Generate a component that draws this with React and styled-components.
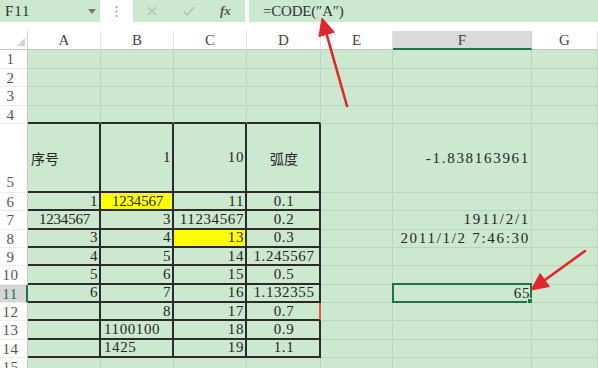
import React from 'react';
import styled, { createGlobalStyle } from 'styled-components';

const GREEN = '#cce8cf';
const GRID = '#bad5bd';
const EXCEL = '#217346';
const INK = '#262626';
const SERIF = "'Liberation Serif', 'DejaVu Serif', serif";

const GlobalStyle = createGlobalStyle`
  html, body { margin: 0; padding: 0; background: #fff; }
  body { overflow: hidden; }
`;

const Page = styled.div`
  position: relative;
  width: 598px;
  height: 368px;
  overflow: hidden;
  background: #fff;
  font-family: ${SERIF};
`;

const Toolbar = styled.div`
  display: flex;
  height: 22px;
`;

const NameBox = styled.div`
  width: 100px;
  box-sizing: border-box;
  padding: 0 4px 0 5px;
  background: ${GREEN};
  display: flex;
  align-items: center;
  justify-content: space-between;
  font-size: 15px;
  letter-spacing: 0.8px;
  color: #333;
`;

const Grip = styled.div`
  width: 33px;
  display: flex;
  align-items: center;
  justify-content: center;
`;

const ButtonBox = styled.div`
  width: 112px;
  box-sizing: border-box;
  padding: 0 13px 0 14px;
  background: ${GREEN};
  display: flex;
  align-items: center;
  justify-content: space-between;
`;

const Fx = styled.span`
  font-style: italic;
  font-weight: bold;
  font-size: 13px;
  color: #555;
  width: 12px;
`;

const Formula = styled.div`
  flex: 1;
  margin-left: 4px;
  padding-left: 14px;
  background: ${GREEN};
  display: flex;
  align-items: center;
  font-size: 15px;
  letter-spacing: -0.2px;
  color: #333;
`;

const Spacer = styled.div`
  height: 9px;
`;

const Sheet = styled.div`
  display: grid;
  grid-template-columns: 28px 73px 73px 73px 74px 72px 139px 1fr;
  grid-template-rows: 19px repeat(4, 18.5px) 69px repeat(9, 18.33px) 1fr;
  height: 337px;
`;

const Corner = styled.div`
  box-sizing: border-box;
  border-right: 1px solid #d4d4d4;
  border-bottom: 1px solid #c6c6c6;
  display: flex;
  align-items: flex-end;
  justify-content: flex-end;
  padding: 0 2px 3px 0;
`;

const ColHead = styled.div`
  box-sizing: border-box;
  display: flex;
  align-items: center;
  justify-content: center;
  background: ${p => (p.$active ? '#dadada' : '#fff')};
  border-right: 1px solid ${p => (p.$active ? '#cfcfcf' : '#e2e2e2')};
  border-bottom: ${p => (p.$active ? `2px solid ${EXCEL}` : '1px solid #c6c6c6')};
  font-size: 15px;
  color: #444;
  padding-top: 1px;
`;

const RowHead = styled.div`
  box-sizing: border-box;
  display: flex;
  align-items: ${p => (p.$tall ? 'flex-end' : 'flex-start')};
  justify-content: center;
  padding: ${p => (p.$tall ? '0 6px 1px 0' : '1px 6px 0 0')};
  background: ${p => (p.$active ? '#d6d6d6' : '#fff')};
  border-right: ${p => (p.$active ? `2px solid ${EXCEL}` : '1px solid #c8c8c8')};
  border-bottom: 1px solid #ededed;
  font-size: 15px;
  letter-spacing: 0.6px;
  line-height: 17px;
  color: ${p => (p.$active ? EXCEL : '#555')};
`;

const justify = { left: 'flex-start', center: 'center', right: 'flex-end' };
const spacing = { cjk: '0', tight: '-0.2px', wide: '1.7px', normal: '0.6px' };
const LINE = '2px solid #2b2b2b';

const Cell = styled.div`
  box-sizing: border-box;
  position: relative;
  display: flex;
  align-items: center;
  justify-content: ${p => justify[p.$align || 'right']};
  padding: 0 1px 0 3px;
  background: ${p => p.$bg || GREEN};
  border-right: ${p => (p.$mark ? '2px solid #e65a45' : p.$boxR ? LINE : `1px solid ${GRID}`)};
  border-bottom: ${p => (p.$boxB ? LINE : `1px solid ${GRID}`)};
  font-family: ${p => (p.$kind === 'cjk' ? "'Noto Sans CJK SC', sans-serif" : SERIF)};
  font-size: ${p => (p.$kind === 'cjk' ? '14px' : '15px')};
  letter-spacing: ${p => spacing[p.$kind || 'normal']};
  color: ${INK};
  white-space: nowrap;
`;

const Selection = styled.div`
  position: absolute;
  left: -1px;
  top: -2px;
  right: -1px;
  bottom: -1px;
  border: 2px solid ${EXCEL};
  pointer-events: none;
`;

const Handle = styled.div`
  position: absolute;
  right: -4px;
  bottom: -4px;
  width: 5px;
  height: 5px;
  background: ${EXCEL};
  border: 1px solid ${GREEN};
`;

const Overlay = styled.svg`
  position: absolute;
  left: 0;
  top: 0;
  pointer-events: none;
`;

const COLS = ['A', 'B', 'C', 'D', 'E', 'F', 'G'];

const rows = [
  { n: 1 },
  { n: 2 },
  { n: 3 },
  { n: 4 },
  {
    n: 5,
    tall: true,
    cells: {
      A: { t: '序号', align: 'left', kind: 'cjk' },
      B: { t: '1' },
      C: { t: '10' },
      D: { t: '弧度', align: 'center', kind: 'cjk' },
      F: { t: '-1.838163961', kind: 'wide' },
    },
  },
  {
    n: 6,
    cells: {
      A: { t: '1' },
      B: { t: '1234567', align: 'center', bg: '#ffff00', kind: 'tight' },
      C: { t: '11' },
      D: { t: '0.1', align: 'center' },
    },
  },
  {
    n: 7,
    cells: {
      A: { t: '1234567', align: 'center', kind: 'tight' },
      B: { t: '3' },
      C: { t: '11234567' },
      D: { t: '0.2', align: 'center' },
      F: { t: '1911/2/1', kind: 'wide' },
    },
  },
  {
    n: 8,
    cells: {
      A: { t: '3' },
      B: { t: '4' },
      C: { t: '13', bg: '#ffff00' },
      D: { t: '0.3', align: 'center' },
      F: { t: '2011/1/2 7:46:30', kind: 'wide' },
    },
  },
  { n: 9, cells: { A: { t: '4' }, B: { t: '5' }, C: { t: '14' }, D: { t: '1.245567', align: 'center' } } },
  { n: 10, cells: { A: { t: '5' }, B: { t: '6' }, C: { t: '15' }, D: { t: '0.5', align: 'center' } } },
  {
    n: 11,
    active: true,
    cells: {
      A: { t: '6' },
      B: { t: '7' },
      C: { t: '16' },
      D: { t: '1.132355', align: 'center' },
      F: { t: '65', selected: true },
    },
  },
  { n: 12, cells: { B: { t: '8' }, C: { t: '17' }, D: { t: '0.7', align: 'center', mark: true } } },
  { n: 13, cells: { B: { t: '1100100', align: 'left' }, C: { t: '18' }, D: { t: '0.9', align: 'center' } } },
  { n: 14, cells: { B: { t: '1425', align: 'left' }, C: { t: '19' }, D: { t: '1.1', align: 'center' } } },
  { n: 15 },
];

const inTable = col => ['A', 'B', 'C', 'D'].includes(col);

const Arrow = ({ from, to, head = 17, half = 8 }) => {
  const dx = to[0] - from[0];
  const dy = to[1] - from[1];
  const len = Math.hypot(dx, dy);
  const ux = dx / len;
  const uy = dy / len;
  const bx = to[0] - ux * head;
  const by = to[1] - uy * head;
  const px = -uy * half;
  const py = ux * half;
  return (
    <g fill="#e3262c" stroke="#e3262c">
      <line x1={from[0]} y1={from[1]} x2={bx + ux * 2} y2={by + uy * 2} strokeWidth="2.6" strokeLinecap="round" />
      <polygon points={`${to[0]},${to[1]} ${bx + px},${by + py} ${bx - px},${by - py}`} strokeWidth="1" />
    </g>
  );
};

const App = () => {
  return (
    <Page>
      <GlobalStyle />
      <Toolbar>
        <NameBox>
          <span>F11</span>
          <svg width="8" height="5" viewBox="0 0 8 5">
            <polygon points="0,0 8,0 4,5" fill="#777" />
          </svg>
        </NameBox>
        <Grip>
          <svg width="3" height="13" viewBox="0 0 3 13">
            <circle cx="1.5" cy="2" r="1" fill="#9a9a9a" />
            <circle cx="1.5" cy="6.5" r="1" fill="#9a9a9a" />
            <circle cx="1.5" cy="11" r="1" fill="#9a9a9a" />
          </svg>
        </Grip>
        <ButtonBox>
          <svg width="10" height="10" viewBox="0 0 10 10">
            <path d="M1 1 L9 9 M9 1 L1 9" stroke="#a9c4ab" strokeWidth="1.3" />
          </svg>
          <svg width="12" height="10" viewBox="0 0 12 10">
            <path d="M1 5.5 L4.5 9 L11 1" stroke="#a9c4ab" strokeWidth="1.3" fill="none" />
          </svg>
          <Fx>fx</Fx>
        </ButtonBox>
        <Formula>=CODE(″A″)</Formula>
      </Toolbar>
      <Spacer />
      <Sheet>
        <Corner>
          <svg width="8" height="8" viewBox="0 0 8 8">
            <polygon points="8,0 8,8 0,8" fill="#d2d2d2" />
          </svg>
        </Corner>
        {COLS.map(c => (
          <ColHead key={c} $active={c === 'F'}>
            {c}
          </ColHead>
        ))}
        {rows.map(r => (
          <React.Fragment key={r.n}>
            <RowHead $active={r.active} $tall={r.tall}>
              {r.n}
            </RowHead>
            {COLS.map(c => {
              const cell = (r.cells && r.cells[c]) || {};
              const boxed = inTable(c) && r.n >= 5 && r.n <= 14;
              return (
                <Cell
                  key={c}
                  $align={cell.align}
                  $bg={cell.bg}
                  $kind={cell.kind}
                  $mark={cell.mark}
                  $boxR={boxed}
                  $boxB={inTable(c) && r.n >= 4 && r.n <= 14}
                >
                  {cell.t}
                  {cell.selected && (
                    <Selection>
                      <Handle />
                    </Selection>
                  )}
                </Cell>
              );
            })}
          </React.Fragment>
        ))}
      </Sheet>
      <Overlay width="598" height="368" viewBox="0 0 598 368">
        <Arrow from={[347, 106]} to={[322, 18]} />
        <Arrow from={[585, 251]} to={[531, 290]} />
      </Overlay>
    </Page>
  );
};

export default App;
